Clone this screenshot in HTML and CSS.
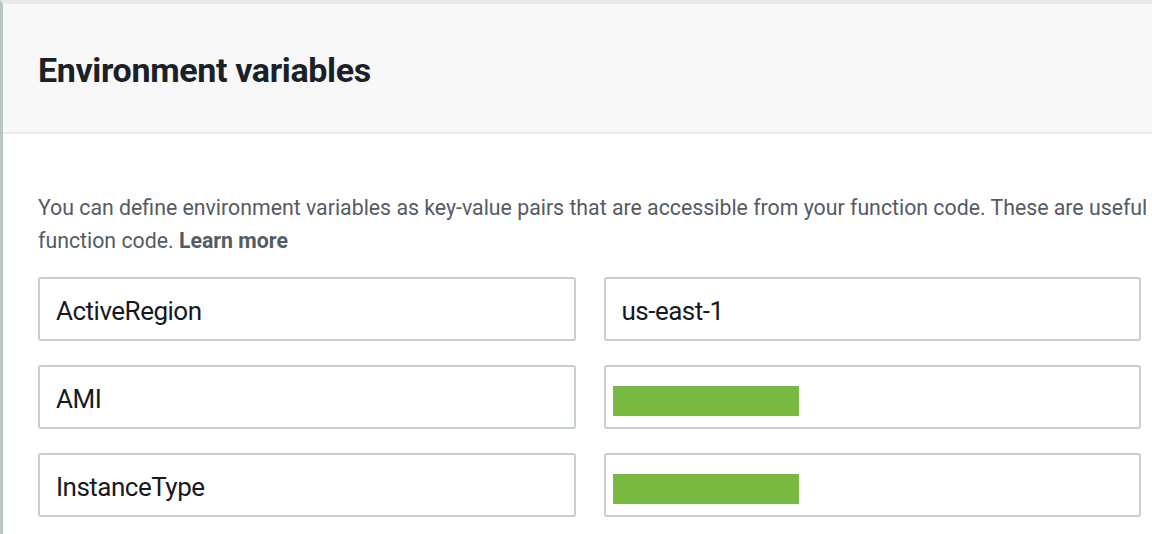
FILE: index.html
```html
<!DOCTYPE html>
<html>
<head>
<meta charset="utf-8">
<link rel="stylesheet" href="styles.css">
</head>
<body>
<div class="panel">
  <div class="panel-header">
    <h2 class="title">Environment variables</h2>
  </div>
  <div class="panel-body">
    <p class="desc"><span class="line">You can define environment variables as key-value pairs that are accessible from your function code. These are useful</span><span class="line">function code. <b class="learn">Learn more</b></span></p>
    <div class="fields">
      <div class="field">ActiveRegion</div>
      <div class="field">us-east-1</div>
      <div class="field">AMI</div>
      <div class="field"><span class="redact"></span></div>
      <div class="field">InstanceType</div>
      <div class="field"><span class="redact"></span></div>
    </div>
  </div>
</div>
</body>
</html>
```

FILE: styles.css
```css
html, body {
  margin: 0;
  padding: 0;
  background: #ffffff;
  overflow: hidden;
}
body {
  width: 1152px;
  height: 534px;
  font-family: Roboto, "Liberation Sans", sans-serif;
}
.panel {
  border-top: 4px solid #e7eaea;
  border-left: 3px solid #bcc5c5;
  height: 534px;
  box-sizing: border-box;
}
.panel-header {
  height: 130px;
  background: #f8f8f8;
  border-bottom: 2px solid #eaeded;
  box-sizing: border-box;
  padding-left: 35px;
  display: flex;
  align-items: center;
}
.title {
  margin: 0;
  font-size: 34px;
  font-weight: 700;
  color: #1b2129;
  letter-spacing: -0.35px;
  padding-top: 4px;
}
.panel-body {
  padding: 57px 11px 0 35px;
}
.desc {
  margin: 0;
  font-size: 21.3px;
  line-height: 33px;
  color: #545b64;
}
.line {
  display: block;
  white-space: nowrap;
}
.learn {
  font-weight: 700;
}
.fields {
  margin-top: 20px;
  display: grid;
  grid-template-columns: 1fr 1fr;
  column-gap: 28px;
  row-gap: 24px;
}
.field {
  height: 64px;
  box-sizing: border-box;
  border: 2px solid #c6cfcf;
  border-radius: 3px;
  padding: 4px 16px 0;
  display: flex;
  align-items: center;
  font-size: 26px;
  color: #16191f;
  letter-spacing: -0.5px;
}
.redact {
  display: block;
  width: 186px;
  height: 30px;
  background: #7aba42;
  margin-left: -9px;
  margin-top: 4px;
}
```
